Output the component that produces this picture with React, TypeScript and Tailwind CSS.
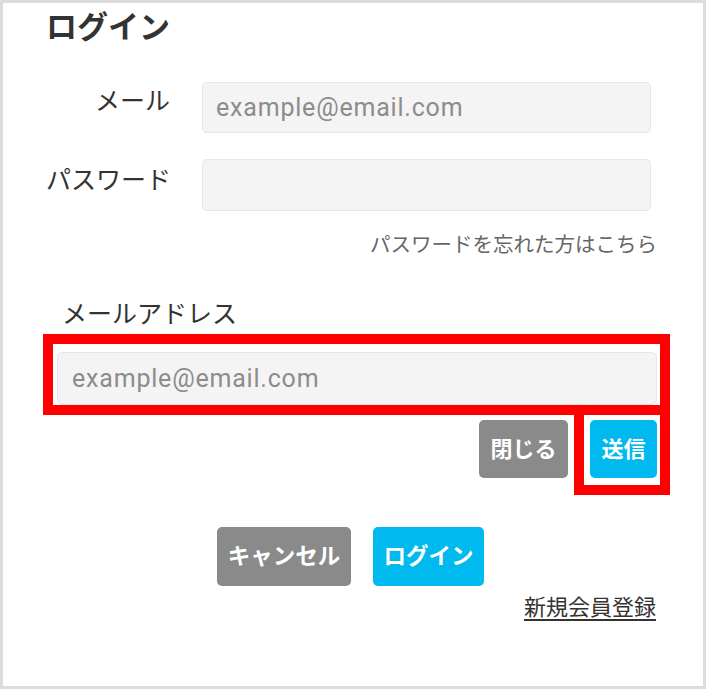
export default function App() {
  return (
    <div className="relative w-[706px] h-[689px] border-[3px] border-[#dcdcdc] bg-white pl-[43px] pr-[46px] font-['Roboto','Noto_Sans_CJK_JP',sans-serif] text-[#333]">
      <h1 className="mt-[7px] h-[36px] text-[31px] leading-[36px] font-bold text-[#333]">ログイン</h1>

      <div className="mt-[36px] flex items-start">
        <div className="mt-[4px] w-[124px] text-right text-[25px] leading-[32px]">メール</div>
        <input
          className="ml-[32px] h-[51px] flex-1 mr-[6px] rounded-[5px] border border-[#e6e6e6] bg-[#f4f4f4] px-[13px] text-[25px] tracking-[0.8px] outline-none placeholder:text-[#8c8c8c]"
          placeholder="example@email.com"
        />
      </div>

      <div className="mt-[26px] flex items-start">
        <div className="mt-[6px] w-[124px] text-right text-[25px] leading-[32px] whitespace-nowrap">パスワード</div>
        <input
          type="password"
          className="ml-[32px] h-[52px] flex-1 mr-[6px] rounded-[5px] border border-[#e6e6e6] bg-[#f4f4f4] px-[13px] text-[24px] outline-none"
        />
      </div>

      <div className="mt-[20px] text-right text-[20.5px] leading-[28px] text-[#666]">パスワードを忘れた方はこちら</div>

      <div className="ml-[11px]">
        <div className="mt-[40px] pl-[5px] text-[25px] leading-[32px]">メールアドレス</div>
        <input
          className="mt-[21px] block h-[53px] w-full rounded-[5px] border border-[#e6e6e6] bg-[#f4f4f4] px-[14px] text-[25px] tracking-[0.8px] outline-none placeholder:text-[#8c8c8c]"
          placeholder="example@email.com"
        />
        <div className="mt-[15px] flex justify-end gap-[22px]">
          <button className="h-[58px] w-[89px] rounded-[5px] bg-[#8a8a8a] text-[22px] font-bold text-white">閉じる</button>
          <button className="h-[58px] w-[67px] rounded-[5px] bg-[#00b9ef] text-[22px] font-bold text-white">送信</button>
        </div>
      </div>

      <div className="mt-[49px] flex justify-center gap-[22px] pr-[2px]">
        <button className="h-[59px] w-[134px] rounded-[5px] bg-[#8a8a8a] text-[22.5px] font-bold text-white">キャンセル</button>
        <button className="h-[59px] w-[111px] rounded-[5px] bg-[#00b9ef] text-[22.5px] font-bold text-white">ログイン</button>
      </div>

      <div className="mt-[8px] flex justify-end pr-[1px]">
        <a className="text-[22px] leading-[28px] text-[#333] underline underline-offset-[4px]">新規会員登録</a>
      </div>

      <div className="pointer-events-none absolute left-[40px] top-[331px] h-[81px] w-[627px] border-[10px] border-[#ff0000]" />
      <div className="pointer-events-none absolute left-[571px] top-[402px] h-[90px] w-[96px] border-[10px] border-[#ff0000]" />
    </div>
  );
}
